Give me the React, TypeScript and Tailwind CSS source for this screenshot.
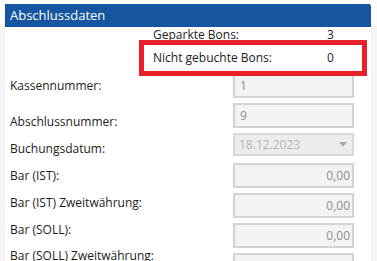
import React from "react";

const labels = [
  { text: "Kassennummer:", h: "h-[36px]" },
  { text: "Abschlussnummer:", h: "h-[27px]" },
  { text: "Buchungsdatum:", h: "h-[27px]" },
  { text: "Bar (IST):", h: "h-[27px]" },
  { text: "Bar (IST) Zweitwährung:", h: "h-[27px]" },
  { text: "Bar (SOLL):", h: "h-[26px]" },
  { text: "Bar (SOLL) Zweitwährung:", h: "h-[26px]" },
];

function Field({ value, right }: { value: string; right?: boolean }) {
  return (
    <div
      className={
        "h-[25px] w-[121px] shrink-0 border-2 border-[#d3d3d3] bg-[#f3f3f3] flex items-center text-[12px] text-[#8e8e8e] " +
        (right ? "justify-end pr-[2px]" : "pl-[5px]")
      }
    >
      {value}
    </div>
  );
}

export default function App() {
  return (
    <div
      className="w-[377px] h-[261px] overflow-hidden bg-white flex flex-col relative"
      style={{ fontFamily: '"Open Sans", "Noto Sans", sans-serif' }}
    >
      <div className="h-[4px] shrink-0" />
      <div className="mx-[5px] mr-[6px] h-[23px] shrink-0 bg-[#1656a0] rounded-tr-[2px] flex items-center pl-[5px] text-[13px] text-white">
        Abschlussdaten
      </div>
      <div className="flex flex-1 min-h-0">
        <div className="w-[5px] bg-[#f6f6f6]" />
        <div className="flex-1 flex flex-col text-[12px] text-[#1b1b1b] leading-[17px]">
          {/* summary */}
          <div className="pl-[148px] pt-[0px] flex flex-col">
            <div className="flex h-[20px] -mt-[1px]">
              <span className="w-[174px]">Geparkte Bons:</span>
              <span>3</span>
            </div>
            <div className="flex h-[27px] pt-[3px]">
              <span className="w-[174px]">Nicht gebuchte Bons:</span>
              <span>0</span>
            </div>
          </div>
          {/* form */}
          <div className="flex">
            <div className="w-[228px] pl-[5px] pt-[4px] flex flex-col">
              {labels.map((l) => (
                <div key={l.text} className={l.h + " shrink-0"}>
                  {l.text}
                </div>
              ))}
            </div>
            <div className="flex flex-col">
              <Field value="1" />
              <div className="h-[5px]" />
              <Field value="9" />
              <div className="h-[5px]" />
              <div className="h-[23px] w-[121px] border-2 border-[#d8d8d8] bg-[#ececec] flex items-center justify-between pl-[4px] pr-[5px] text-[12px] text-[#b5b5b5]">
                <span>18.12.2023</span>
                <svg width="8" height="5" viewBox="0 0 8 5">
                  <path d="M0 0h8L4 4.5z" fill="#a6a6a6" />
                </svg>
              </div>
              <div className="h-[7px]" />
              <Field value="0,00" right />
              <div className="h-[5px]" />
              <Field value="0,00" right />
              <div className="h-[5px]" />
              <Field value="0,00" right />
              <div className="h-[5px]" />
              <Field value="0,00" right />
            </div>
          </div>
        </div>
        <div className="w-[6px] bg-[#f6f6f6]" />
      </div>
      {/* annotation frame */}
      <div className="absolute left-[139px] top-[40px] w-[228px] h-[36px] border-[5px] border-[#e8202a]" />
    </div>
  );
}
